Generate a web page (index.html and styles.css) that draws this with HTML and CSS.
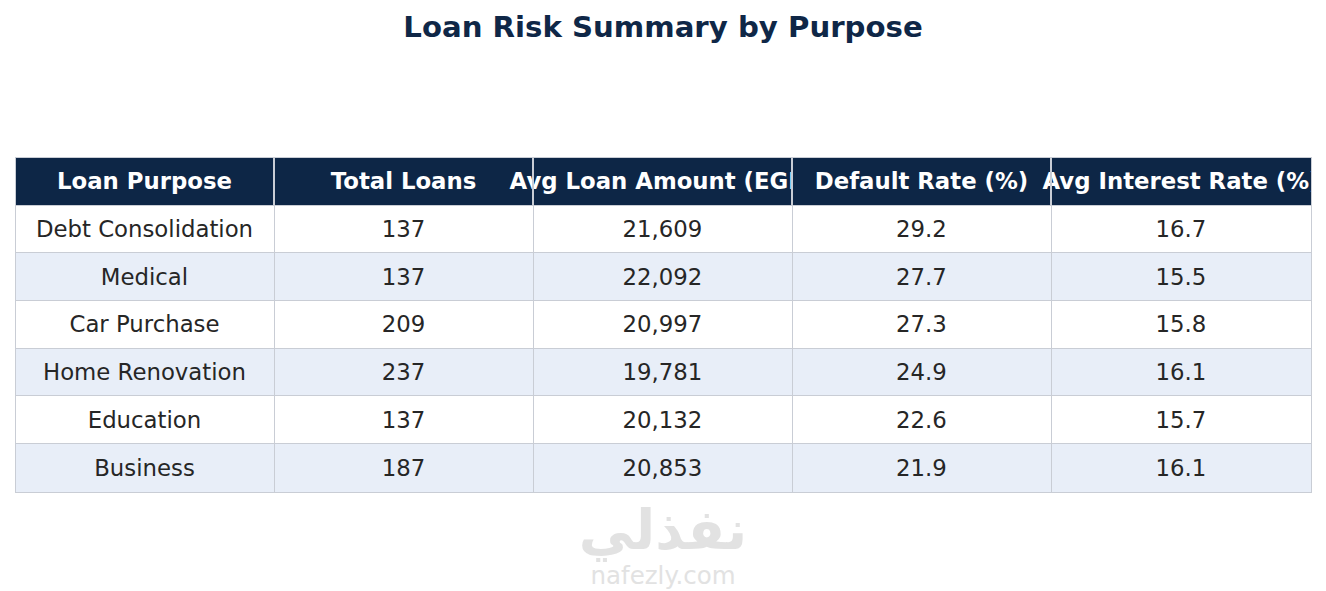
FILE: index.html
```html
<!DOCTYPE html>
<html lang="en">
<head>
<meta charset="utf-8">
<title>Loan Risk Summary by Purpose</title>
<link rel="stylesheet" href="styles.css">
</head>
<body>
<h1 class="title">Loan Risk Summary by Purpose</h1>
<div class="table">
  <div class="cell head">Loan Purpose</div>
  <div class="cell head">Total Loans</div>
  <div class="cell head">Avg Loan Amount (EGP)</div>
  <div class="cell head">Default Rate (%)</div>
  <div class="cell head last">Avg Interest Rate (%)</div>

  <div class="cell">Debt Consolidation</div><div class="cell">137</div><div class="cell">21,609</div><div class="cell">29.2</div><div class="cell last">16.7</div>
  <div class="cell alt">Medical</div><div class="cell alt">137</div><div class="cell alt">22,092</div><div class="cell alt">27.7</div><div class="cell alt last">15.5</div>
  <div class="cell">Car Purchase</div><div class="cell">209</div><div class="cell">20,997</div><div class="cell">27.3</div><div class="cell last">15.8</div>
  <div class="cell alt">Home Renovation</div><div class="cell alt">237</div><div class="cell alt">19,781</div><div class="cell alt">24.9</div><div class="cell alt last">16.1</div>
  <div class="cell">Education</div><div class="cell">137</div><div class="cell">20,132</div><div class="cell">22.6</div><div class="cell last">15.7</div>
  <div class="cell alt bottom">Business</div><div class="cell alt bottom">187</div><div class="cell alt bottom">20,853</div><div class="cell alt bottom">21.9</div><div class="cell alt bottom last">16.1</div>
</div>
<div class="watermark">
  <div class="wm-ar" dir="rtl" lang="ar">نفذلي</div>
  <div class="wm-en">nafezly.com</div>
</div>
</body>
</html>
```

FILE: styles.css
```css
html, body {
  margin: 0;
  padding: 0;
  background: #ffffff;
}
body {
  width: 1326px;
  height: 591px;
  overflow: hidden;
  font-family: "DejaVu Sans", "Liberation Sans", sans-serif;
}
.title {
  margin: 10px 0 0;
  font-size: 29.2px;
  line-height: 34px;
  font-weight: bold;
  text-align: center;
  color: #0f2747;
}
.table {
  width: 1297px;
  margin: 113px auto 0;
  box-sizing: border-box;
  border: 1.5px solid #c9cdd5;
  display: grid;
  grid-template-columns: repeat(5, minmax(0, 1fr));
  grid-auto-rows: 47.7px;
  overflow: hidden;
}
.cell {
  position: relative;
  box-sizing: border-box;
  min-width: 0;
  display: flex;
  align-items: center;
  justify-content: center;
  white-space: nowrap;
  font-size: 22.8px;
  color: #262626;
  background: #ffffff;
  border-right: 1.5px solid #c9cdd5;
  border-bottom: 1.5px solid #c9cdd5;
}
.cell.last { border-right: none; }
.cell.bottom { border-bottom: none; }
.cell.alt { background: #e8eef8; }
.cell.head {
  background: #0d2646;
  color: #ffffff;
  font-weight: bold;
}
.cell.head + .cell.head::before {
  content: "";
  position: absolute;
  left: -1.5px;
  top: 0;
  bottom: 0;
  width: 1.5px;
  background: #c9cdd5;
}
.watermark {
  margin-top: 12px;
  display: flex;
  flex-direction: column;
  align-items: center;
  color: #e2e2e2;
}
.wm-ar {
  font-family: "DejaVu Sans", sans-serif;
  font-weight: bold;
  font-size: 55px;
  line-height: 50px;
}
.wm-en {
  margin-top: 9px;
  font-family: "DejaVu Sans", sans-serif;
  font-size: 24.5px;
  line-height: 24px;
}
```
